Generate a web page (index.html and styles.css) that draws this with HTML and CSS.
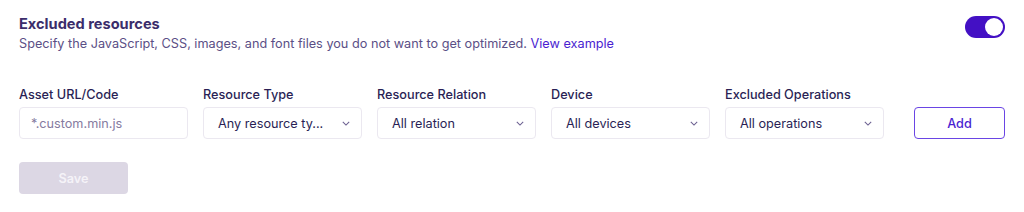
FILE: index.html
```html
<!DOCTYPE html>
<html lang="en">
<head>
    <meta charset="UTF-8">
    <meta name="viewport" content="width=device-width, initial-scale=1.0">
    <title>Excluded resources</title>
    <link rel="stylesheet" href="styles.css">
</head>
<body>
    <div class="panel">
        <!-- Header -->
        <div class="header">
            <div class="header-text">
                <h1>Excluded resources</h1>
                <p class="subtitle">Specify the JavaScript, CSS, images, and font files you do not want to get optimized. <a href="#" class="link">View example</a></p>
            </div>
            <label class="toggle">
                <span class="knob"></span>
            </label>
        </div>

        <!-- Form row -->
        <div class="form-row">
            <div class="field field-wide">
                <label>Asset URL/Code</label>
                <input type="text" class="input" placeholder="*.custom.min.js">
            </div>
            <div class="field">
                <label>Resource Type</label>
                <div class="select"><span>Any resource ty...</span><svg class="chevron" viewBox="0 0 10 6"><path d="M1 1l4 4 4-4"/></svg></div>
            </div>
            <div class="field">
                <label>Resource Relation</label>
                <div class="select"><span>All relation</span><svg class="chevron" viewBox="0 0 10 6"><path d="M1 1l4 4 4-4"/></svg></div>
            </div>
            <div class="field">
                <label>Device</label>
                <div class="select"><span>All devices</span><svg class="chevron" viewBox="0 0 10 6"><path d="M1 1l4 4 4-4"/></svg></div>
            </div>
            <div class="field">
                <label>Excluded Operations</label>
                <div class="select"><span>All operations</span><svg class="chevron" viewBox="0 0 10 6"><path d="M1 1l4 4 4-4"/></svg></div>
            </div>
            <button class="add-button">Add</button>
        </div>

        <button class="save-button" disabled>Save</button>
    </div>
</body>
</html>
```

FILE: styles.css
```css
* {
    margin: 0;
    padding: 0;
    box-sizing: border-box;
}

body {
    font-family: Inter, 'Noto Sans', sans-serif;
    background: #fff;
    color: #2a1f55;
}

.panel {
    padding: 15px 19px 0 19px;
}

/* Header */
.header {
    display: flex;
    justify-content: space-between;
    align-items: flex-start;
}

.header h1 {
    font-size: 14.6px;
    font-weight: 700;
    color: #3b2d6b;
    line-height: 19px;
}

.subtitle {
    font-size: 12.7px;
    color: #5b4f86;
    line-height: 18px;
    margin-top: 1px;
}

.link {
    color: #4a1ed1;
    text-decoration: none;
}

.toggle {
    width: 40px;
    height: 22px;
    border-radius: 11px;
    background: #4310c4;
    margin-top: 1px;
    position: relative;
    display: block;
}

.knob {
    position: absolute;
    right: 2px;
    top: 2px;
    width: 18px;
    height: 18px;
    border-radius: 50%;
    background: #fff;
}

/* Form row */
.form-row {
    display: flex;
    align-items: flex-end;
    gap: 15px;
    margin-top: 34px;
}

.field {
    display: flex;
    flex-direction: column;
    flex-shrink: 0;
    width: 159px;
}

.field-wide {
    width: 169px;
}

.field label {
    font-size: 12.7px;
    font-weight: 500;
    color: #2a1f55;
    line-height: 16px;
    margin-bottom: 4px;
}

.input,
.select {
    height: 32px;
    border: 1px solid #ebe8f0;
    border-radius: 4px;
    font-family: inherit;
    font-size: 12.7px;
    color: #2a1f55;
}

.input {
    padding: 0 11px;
}

.input::placeholder {
    color: #857b9f;
}

.select {
    display: flex;
    align-items: center;
    justify-content: space-between;
    padding: 0 11px 0 14px;
}

.chevron {
    width: 8px;
    height: 5px;
    fill: none;
    stroke: #6a5f90;
    stroke-width: 1.3;
}

.add-button {
    flex-shrink: 0;
    margin-left: 15px;
    width: 91px;
    height: 32px;
    border: 1px solid #6a45e4;
    border-radius: 4px;
    background: #fff;
    color: #4a1ed1;
    font-family: inherit;
    font-size: 12.7px;
    font-weight: 500;
}

.save-button {
    margin-top: 23px;
    width: 109px;
    height: 32px;
    border: none;
    border-radius: 4px;
    background: #dcd7e4;
    color: #f5f3f8;
    font-family: inherit;
    font-size: 12.7px;
    font-weight: 600;
}
```
